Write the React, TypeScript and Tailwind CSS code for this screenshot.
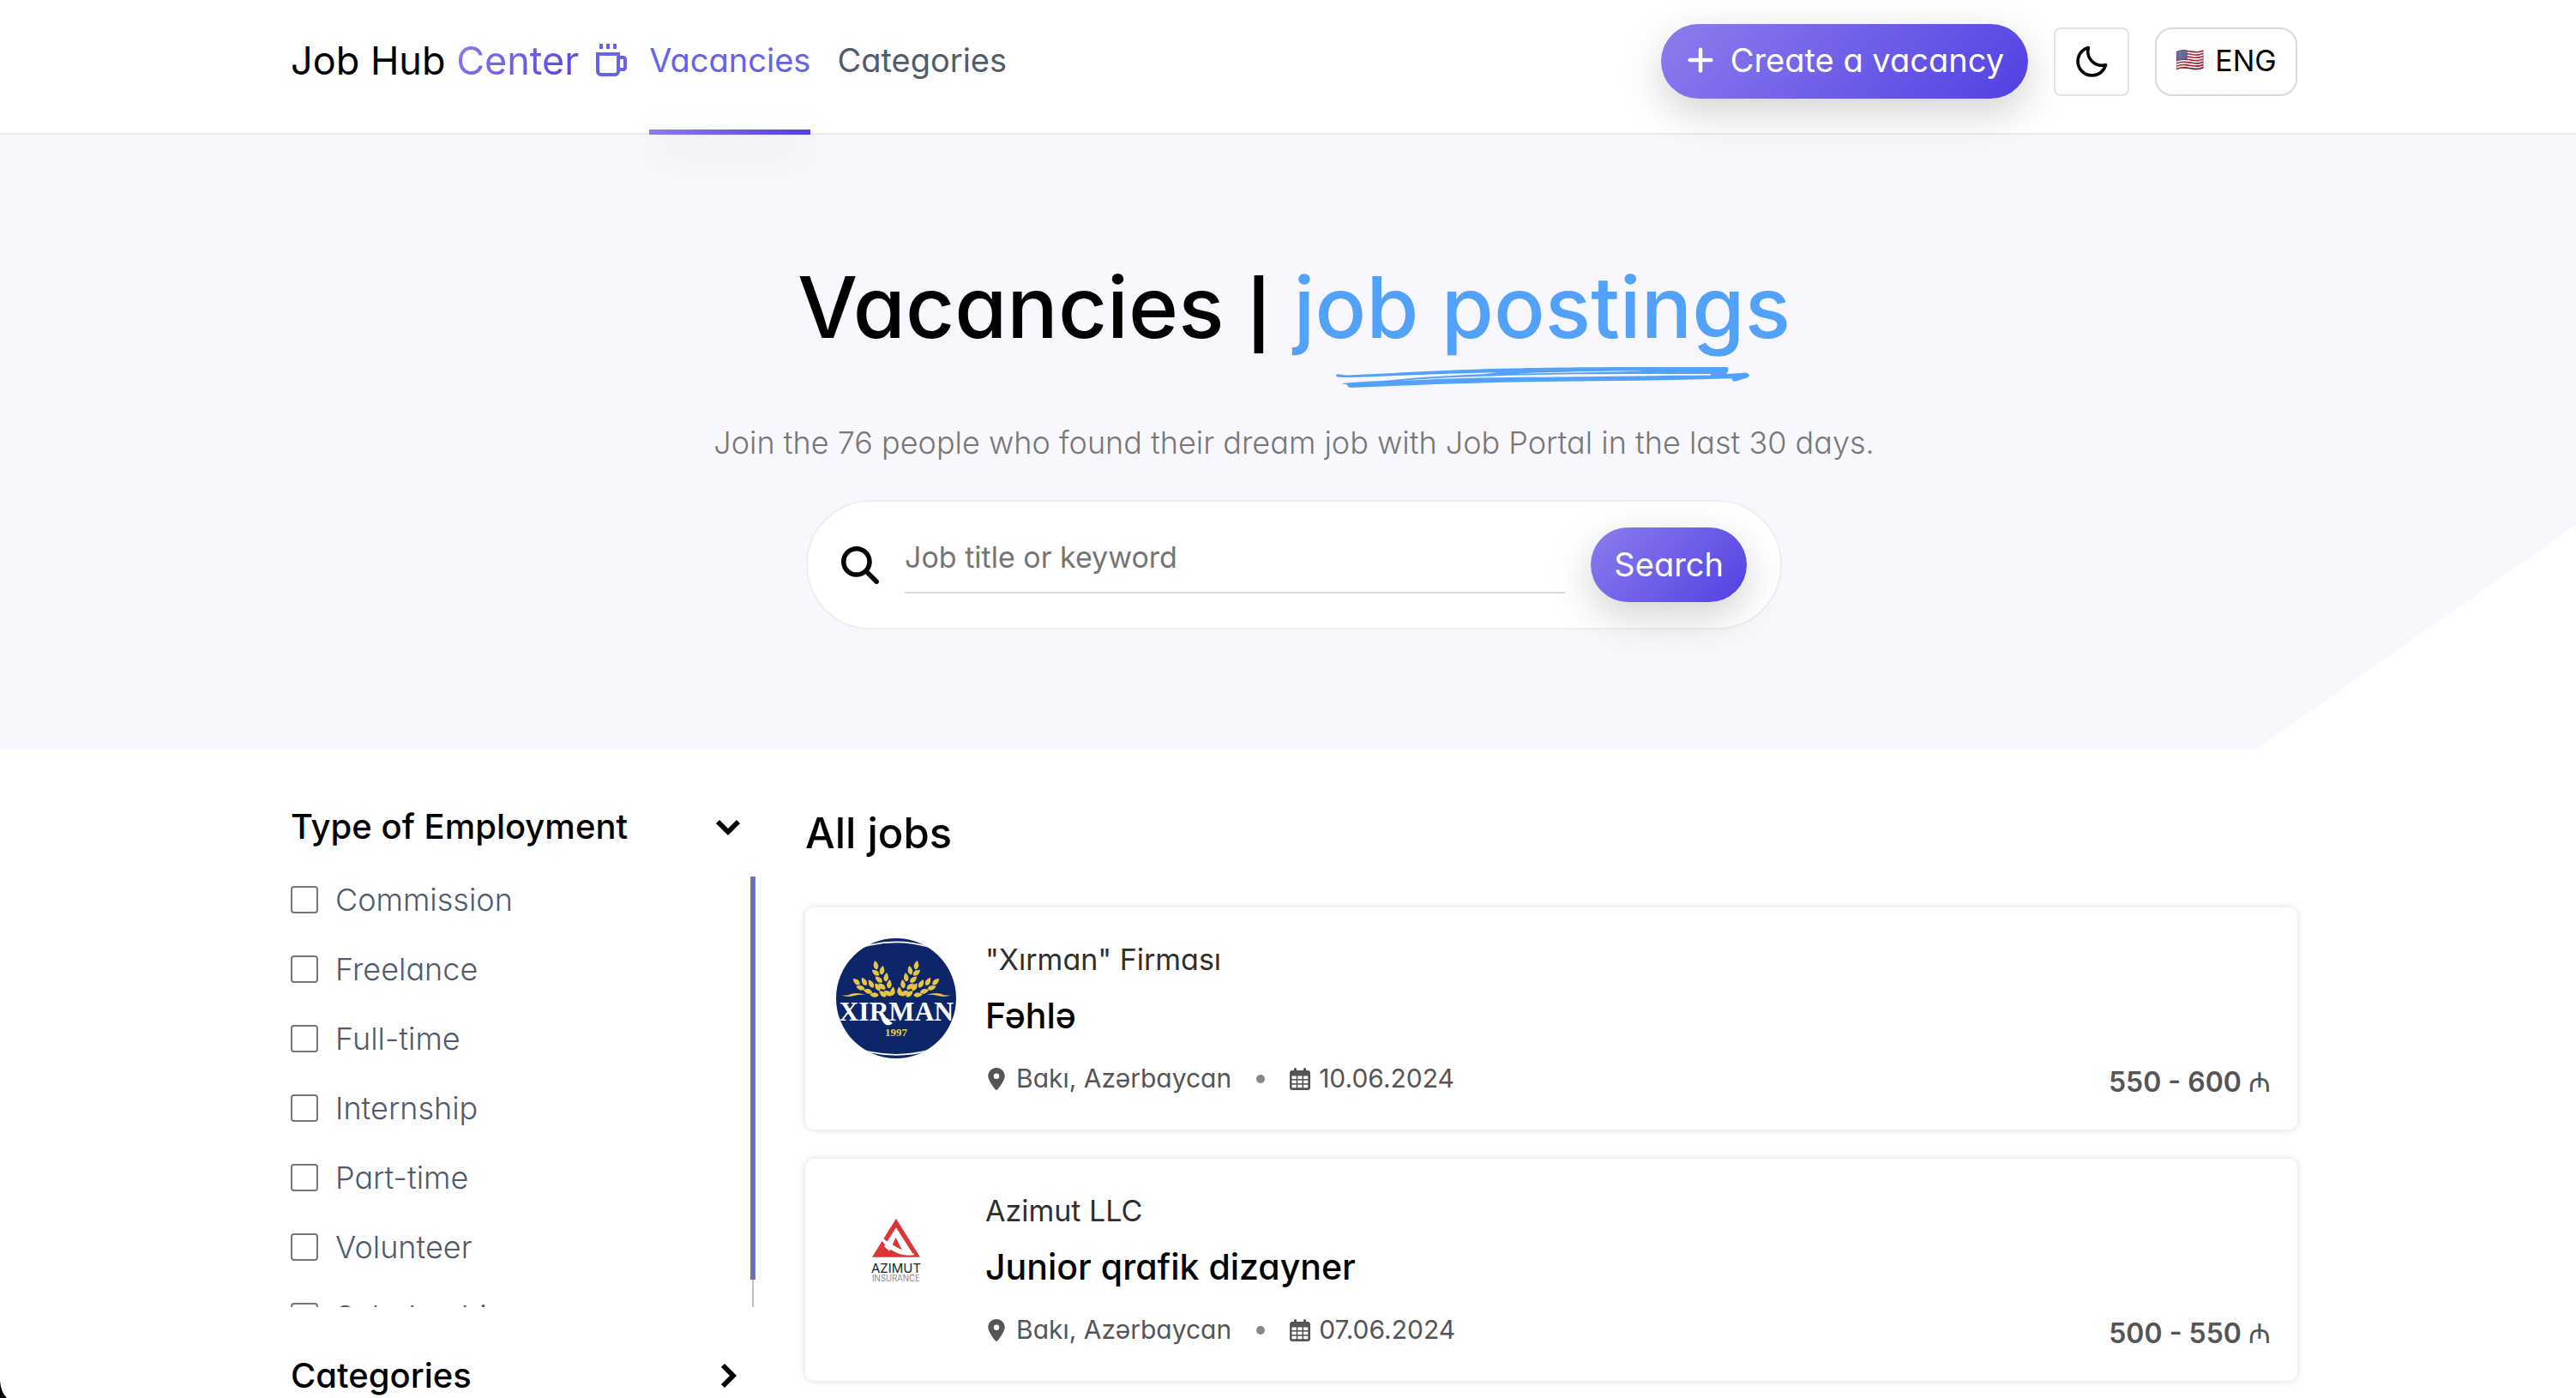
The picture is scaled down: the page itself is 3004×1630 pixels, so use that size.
import React from "react";
import { BiCoffee, BiMoon } from "react-icons/bi";
import { FaPlus, FaMagnifyingGlass, FaLocationDot } from "react-icons/fa6";

const container = "mx-auto w-full max-w-[2354px] pl-[14px]";
const gradient = "bg-[linear-gradient(135deg,#8b7eed_0%,#5240e3_100%)]";
const softShadow = "shadow-[0_16px_48px_rgba(0,0,0,0.18)]";

const employmentTypes = [
  "Commission",
  "Freelance",
  "Full-time",
  "Internship",
  "Part-time",
  "Volunteer",
  "Scholarship",
];

type Job = {
  company: string;
  title: string;
  place: string;
  date: string;
  salary: string;
  Logo: () => React.ReactElement;
};

function Chevron({ className = "" }: { className?: string }) {
  return (
    <svg viewBox="0 0 32 32" className={`size-8 shrink-0 ${className}`} fill="none" stroke="currentColor" strokeWidth="5.7" aria-hidden="true">
      <path d="M4 10L16 22L28 10" />
    </svg>
  );
}

function CalendarIcon() {
  const cells = [0, 1, 2];
  return (
    <svg viewBox="0 0 24 26" className="h-[26px] w-6 shrink-0" aria-hidden="true">
      <path fill="#555" d="M5 1.5a1.5 1.5 0 0 1 3 0V3h8V1.500a1.500 1.500 0 0 1 3 0V3h2a3 3 0 0 1 3 3v17a3 3 0 0 1-3 3H3a3 3 0 0 1-3-3V6a3 3 0 0 1 3-3h2z" />
      {cells.map((r) =>
        cells.map((c) => (
          <rect key={`${r}-${c}`} x={2.5 + c * 6.8} y={9.5 + r * 5.1} width="5.2" height="3.5" fill="#fff" />
        )),
      )}
    </svg>
  );
}

function Brush() {
  return (
    <svg viewBox="45 42 1446 69" preserveAspectRatio="none" className="absolute top-full left-[49px] h-6 w-[482px]" fill="#52a1fa" aria-hidden="true">
      <path d="M48 66C60 66 70 69 84 69C260 62 420 52 620 47C780 44 900 42 1140 42H1412Q1420 44 1417 53L1411 65L1475 61Q1493 63 1490 72Q1486 78 1472 81L1440 90Q1430 90 1430 80L1395 81C1200 87 1000 89 820 90C560 92 330 101 94 111Q86 108 82 100Q70 99 63 97C110 92 180 90 238 86C340 76 450 70 560 66L610 60C420 64 250 71 120 76C90 78 60 76 48 75Q43 70 48 66Z" />
      <path fill="#f8f7fd" d="M280 87C420 77 600 71 800 67C980 64 1180 65 1356 65V69C1180 70 1000 73 850 75C640 76 460 78 280 88Z" />
      <path fill="#f8f7fd" d="M690 63C760 60 850 57 1116 54V55C1000 59 850 61 690 64Z" />
    </svg>
  );
}

const grains = [
  [184, 136, -12], [206, 154, 12], [183, 162, -52], [220, 178, 8], [194, 186, -50], [231, 202, 8],
  [205, 210, -50], [243, 227, 8], [226, 234, -60],
  [116, 194, -48], [143, 193, -30], [130, 215, -72], [167, 201, -30], [156, 227, -74], [190, 212, -32],
  [178, 240, -86], [208, 236, -50],
];

function WheatHalf() {
  return (
    <g fill="#e8c53f">
      {grains.map(([x, y, r]) => (
        <path key={`${x}-${y}`} transform={`translate(${x} ${y}) rotate(${r})`} d="M0 -16Q10 -4 8 6Q5 14 0 16Q-5 14 -8 6Q-10 -4 0 -16Z" />
      ))}
      <path d="M63 241Q85 244 98 236Q118 230 150 240Q128 238 108 243Q85 250 63 241Z" />
    </g>
  );
}

function XirmanLogo() {
  return (
    <svg viewBox="0 0 140 140" className="size-[140px] shrink-0 rounded-full" role="img" aria-label="Xırman">
      <rect width="140" height="140" fill="#0d2569" />
      <g transform="translate(-15 -14) scale(0.3333)">
        <path d="M140 72Q255 38 370 72M140 434Q255 465 370 434" fill="none" stroke="#fff" strokeWidth="5" />
        <WheatHalf />
        <g transform="translate(510 0) scale(-1 1)">
          <WheatHalf />
        </g>
        <path fill="#fff" d="M202 318L226 322Q230 334 243 338Q236 347 223 346Q210 343 202 318Z" />
        <text x="256" y="331" textAnchor="middle" fontSize="95" fontWeight="700" fill="#fff" fontFamily="Liberation Serif, serif">XIRMAN</text>
        <text x="255" y="385" textAnchor="middle" fontSize="39" fontWeight="700" fill="#e3d24a" fontFamily="Liberation Serif, serif">1997</text>
      </g>
    </svg>
  );
}

function AzimutLogo() {
  return (
    <svg viewBox="0 0 140 140" className="size-[140px] shrink-0 rounded-full" role="img" aria-label="Azimut">
      <g transform="translate(25 23) scale(0.3333)">
        <path fill="#dc3634" d="M135 32L219 167H51Z" />
        <path fill="#fff" d="M135 64L192 153H78Z" />
        <path fill="#dc3634" d="M134 98L161 153H78L92 128Q104 140 112 146Z" />
        <path fill="#fff" d="M78 90Q94 108 122 124Q160 148 198 155V160Q150 166 112 138Q86 120 78 90Z" />
        <text x="135" y="221" textAnchor="middle" fontSize="45" fill="#222" fontFamily="Inter, sans-serif">AZIMUT</text>
        <text x="135" y="251" textAnchor="middle" fontSize="29" fontWeight="300" fill="#666" fontFamily="Inter, sans-serif">INSURANCE</text>
      </g>
    </svg>
  );
}

const jobs: Job[] = [
  { company: '"Xırman" Firması', title: "Fəhlə", place: "Bakı, Azərbaycan", date: "10.06.2024", salary: "550 - 600", Logo: XirmanLogo },
  { company: "Azimut LLC", title: "Junior qrafik dizayner", place: "Bakı, Azərbaycan", date: "07.06.2024", salary: "500 - 550", Logo: AzimutLogo },
];

function Header() {
  return (
    <header className="relative z-10 border-b-2 border-[#ededf0] bg-white">
      <div className={`${container} flex h-[155px] items-start justify-between`}>
        <div className="flex gap-5">
          <a href="#" className="flex h-[141px] items-center gap-3.5 text-[45px] leading-[68px] whitespace-nowrap text-black">
            <span>
              Job Hub{" "}
              <span className="bg-[linear-gradient(135deg,#8b7eed_0%,#5240e3_100%)] bg-clip-text text-transparent">Center</span>
            </span>
            <BiCoffee className="size-12 text-[#6562ec]" />
          </a>
          <nav className="flex gap-[31px] text-[38px] leading-[58px]">
            <a href="#vacancies" className="flex h-[157px] flex-col justify-between pt-[41px] text-[#6562ee]">
              Vacancies
              <span className={`h-1.5 ${gradient} ${softShadow}`} />
            </a>
            <a href="#categories" className="pt-[41px] text-[#525c6f]">Categories</a>
          </nav>
        </div>
        <div className="flex items-center gap-[30px] pt-7">
          <button type="button" className={`flex h-[87px] items-center gap-[17px] rounded-[44px] px-7 pb-[3px] text-[38px] text-white ${gradient} ${softShadow}`}>
            <FaPlus className="size-9" />
            Create a vacancy
          </button>
          <button type="button" aria-label="Dark theme" className="grid h-20 w-[88px] place-items-center rounded-lg border-2 border-[#e4e4e7] bg-white">
            <BiMoon className="size-11" />
          </button>
          <button type="button" className="flex h-20 w-[166px] items-center justify-center gap-3 rounded-[20px] border-2 border-[#d9d9df] bg-white pb-[3px] text-[34px]">
            <span className="text-[27px]">🇺🇸</span>
            ENG
          </button>
        </div>
      </div>
    </header>
  );
}

function Hero() {
  return (
    <section className="bg-[#f8f7fd] pt-[131px] pb-[140px] [clip-path:polygon(0_0,100%_0,100%_63.5%,87.55%_100%,0_100%)]">
      <div className={`${container} flex flex-col items-center`}>
        <h1 className="text-[99px] leading-[140px] font-medium whitespace-nowrap text-black">
          Vacancies <span className="text-[76px] leading-none font-bold">|</span>{" "}
          <span className="relative inline-block text-[#52a1fa]">job postings<Brush /></span>
        </h1>
        <p className="mt-[61px] text-[36px] leading-[54px] font-light text-[#777]">
          Join the 76 people who found their dream job with Job Portal in the last 30 days.
        </p>
        <form className="mt-10 flex h-[151px] w-full max-w-[1138px] items-center gap-[30px] rounded-[76px] border-2 border-[#eeeef0] bg-white px-[39px]" onSubmit={(e) => e.preventDefault()}>
          <FaMagnifyingGlass className="size-11 shrink-0" />
          <input
            type="text"
            aria-label="Job title or keyword"
            placeholder="Job title or keyword"
            className="mb-[17px] h-[83px] min-w-0 flex-1 border-b-2 border-[#dadada] bg-transparent text-[34px] outline-none placeholder:text-[#757575]"
          />
          <button type="submit" className={`h-[87px] rounded-[44px] px-[27px] text-[38px] text-white ${gradient} ${softShadow}`}>
            Search
          </button>
        </form>
      </div>
    </section>
  );
}

function Sidebar() {
  return (
    <aside className="w-[542px] shrink-0 pt-[3px]">
      <button type="button" aria-expanded="true" className="flex w-full items-center justify-between pr-4 text-[40px] leading-[50px] font-medium">
        Type of Employment
        <Chevron />
      </button>
      <div className="mt-[33px] flex h-[502px] overflow-hidden">
        <ul className="flex flex-1 flex-col gap-[27px]">
          {employmentTypes.map((name) => (
            <li key={name}>
              <label className="flex items-center gap-5 text-[36px] leading-[54px] font-light text-[#505a6e]">
                <input type="checkbox" className="size-8 appearance-none rounded border-2 border-[#767676] bg-white checked:bg-[#6562ee]" />
                {name}
              </label>
            </li>
          ))}
        </ul>
        <div className="flex w-1.5 flex-col items-center" aria-hidden="true">
          <div className="h-[470px] w-1.5 border-x-2 border-[#6f7d95] bg-[#6562ee]" />
          <div className="w-0.5 flex-1 bg-[#bfbfbf]" />
        </div>
      </div>
      <button type="button" aria-expanded="false" className="mt-[55px] flex w-full items-center justify-between pr-4 text-[40px] leading-[50px] font-medium">
        Categories
        <Chevron className="-rotate-90" />
      </button>
    </aside>
  );
}

function JobCard({ job }: { job: Job }) {
  return (
    <article className="flex gap-[34px] rounded-[10px] bg-white py-9 pr-[31px] pl-9 shadow-[0_0_8px_rgba(0,0,0,0.15)]">
      <job.Logo />
      <div className="min-w-0 flex-1">
        <p className="text-[34px] leading-[50px] text-[#2f2f2f]">{job.company}</p>
        <h3 className="mt-2.5 text-[41px] leading-[60px] font-medium text-black">{job.title}</h3>
        <div className="mt-5 flex items-center text-[30px] leading-[47px] text-[#555]">
          <FaLocationDot className="size-[26px]" />
          <span className="ml-2.5">{job.place}</span>
          <span className="mx-[29px] size-2.5 rounded-full bg-[#888]" />
          <CalendarIcon />
          <span className="ml-2.5">{job.date}</span>
        </div>
      </div>
      <p className="self-end text-[32px] leading-[38px] font-semibold text-[#555]">
        {job.salary} <span className="font-['Open_Sans'] font-medium">₼</span>
      </p>
    </article>
  );
}

export default function App() {
  return (
    <div className="h-screen overflow-hidden bg-white [font-family:Inter,'Open_Sans',sans-serif] text-black [font-feature-settings:'cv11']">
      <Header />
      <Hero />
      <main className={`${container} flex gap-[58px] pt-[62px]`}>
        <Sidebar />
        <section className="min-w-0 flex-1">
          <h2 className="text-[49px] leading-[72px] font-medium">All jobs</h2>
          <div className="mt-[50px] flex flex-col gap-[34px]">
            {jobs.map((job) => (
              <JobCard key={job.title} job={job} />
            ))}
          </div>
        </section>
      </main>
      <svg viewBox="0 0 8 20" className="fixed bottom-0 left-0 h-5 w-2" aria-hidden="true">
        <path d="M0 0Q1 13 8 20H0Z" />
      </svg>
    </div>
  );
}
